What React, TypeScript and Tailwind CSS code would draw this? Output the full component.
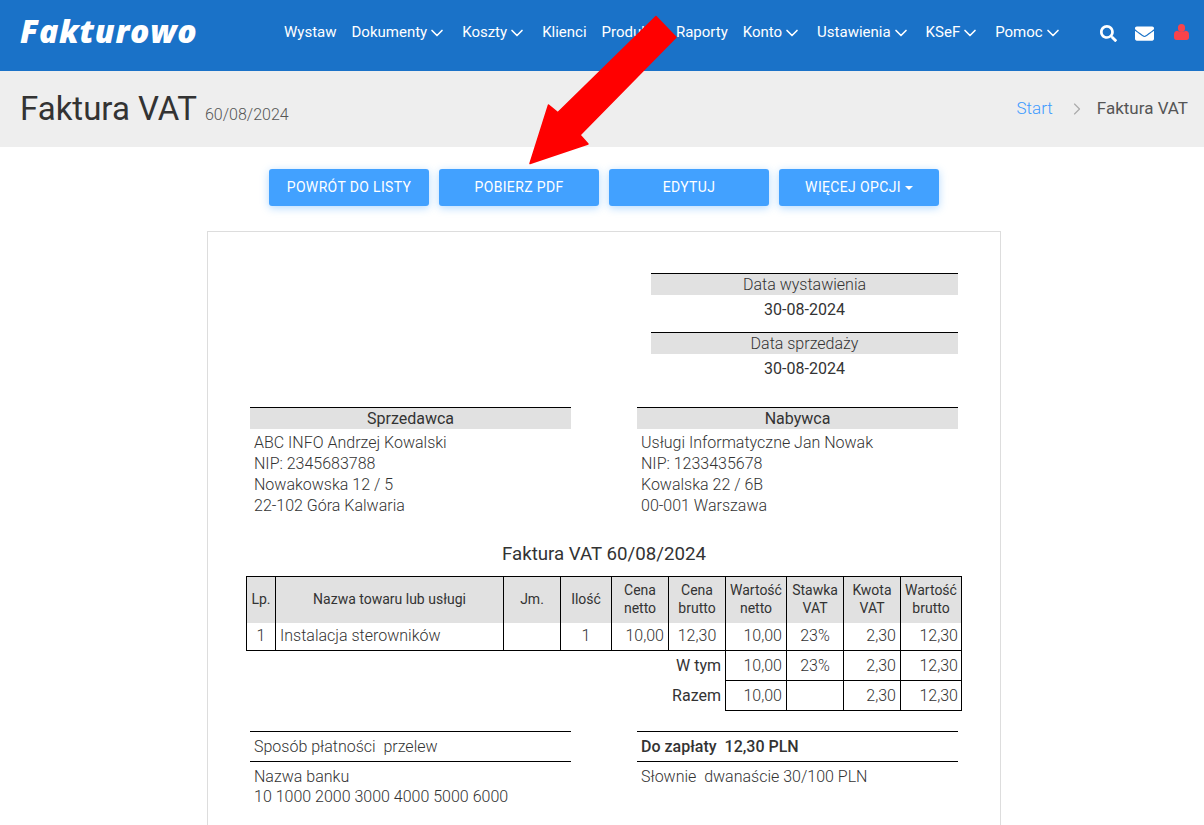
import React from "react";
import { ChevronDown, ChevronRight } from "lucide-react";
import { FaSearch, FaEnvelope } from "react-icons/fa";

const nav: [string, boolean][] = [
  ["Wystaw", false],
  ["Dokumenty", true],
  ["Koszty", true],
  ["Klienci", false],
  ["Produkty", false],
  ["Raporty", false],
  ["Konto", true],
  ["Ustawienia", true],
  ["KSeF", true],
  ["Pomoc", true],
];

const btn =
  "w-[160px] h-[37px] flex items-center justify-center bg-[#42a1ff] text-white text-[14px] rounded-[3px] shadow-[0_2px_8px_rgba(66,161,255,0.4)] tracking-[0.35px]";

function DateBlock({ label, value }: { label: string; value: string }) {
  return (
    <div className="w-[307px] text-center">
      <div className="border-t border-black bg-[#e1e1e1] h-[22px] leading-[21px] font-light text-[16px] text-[#333]">{label}</div>
      <div className="h-[37px] leading-[29px] text-[16px] text-[#333]">{value}</div>
    </div>
  );
}

function Party({ title, lines }: { title: string; lines: string[] }) {
  return (
    <div className="w-[321px]">
      <div className="border-t border-black bg-[#e1e1e1] h-[22px] leading-[21px] text-center text-[16px] text-[#333]">{title}</div>
      <div className="pl-[4px] pt-[3px] font-light text-[16px] leading-[21px] text-[#333]">
        {lines.map((l) => (
          <div key={l}>{l}</div>
        ))}
      </div>
    </div>
  );
}

const th = "border border-b-0 border-black font-normal text-[14px] leading-[18px] text-[#333] text-center align-middle p-0 pb-[2px]";
const td = "border border-black font-light text-[16px] text-[#333] p-0 pr-[4px] text-right";
const tdl = "border border-black font-light text-[16px] text-[#333] p-0 pr-[3px] text-right";
const tdc = "border border-black font-light text-[16px] text-[#333] p-0 text-center";

export default function App() {
  return (
    <div className="relative h-[825px] overflow-hidden bg-white font-['Roboto',sans-serif] text-[#333]">
      <header className="h-[71px] bg-[#1a72c8] flex items-center text-white">
        <div className="w-[284px] pl-[20px] font-['Open_Sans',sans-serif] italic font-extrabold text-[32px] leading-none tracking-[0.7px] -mt-[9px]">
          Fakturowo
        </div>
        <nav className="flex items-center gap-[15px] text-[15px] -mt-[6px]">
          {nav.map(([n, c]) => (
            <span key={n} className="flex items-center whitespace-nowrap">
              {n}
              {c && <ChevronDown size={20} strokeWidth={2} />}
            </span>
          ))}
        </nav>
        <div className="ml-auto flex items-center pr-[15px] -mt-[5px]">
          <FaSearch size={17} className="mt-[1px]" />
          <FaEnvelope size={19} className="ml-[18px]" />
          <svg width="15" height="16" viewBox="0 0 15 16" className="ml-[20px] -mt-[2px]">
            <ellipse cx="7.500" cy="4" rx="3.600" ry="4" fill="#f8434a" />
            <path d="M0 13.500V10.500C0 8 1.500 6.800 3.500 6.800C5 8.300 10 8.300 11.500 6.800C13.500 6.800 15 8 15 10.500V13.500C15 15 14 16 12.500 16H2.500C1 16 0 15 0 13.500Z" fill="#f8434a" />
          </svg>
        </div>
      </header>

      <div className="h-[76px] bg-[#eee] flex items-center justify-between pl-[20px] pr-[16px]">
        <div className="flex items-baseline gap-[8px]">
          <h1 className="text-[33px] font-normal text-[#333] leading-none">Faktura VAT</h1>
          <span className="text-[16px] font-light text-[#555]">60/08/2024</span>
        </div>
        <div className="flex items-center text-[17px]">
          <span className="text-[#3d9bff] font-light">Start</span>
          <ChevronRight size={20} strokeWidth={1.4} className="text-[#aaa] ml-[14px] mr-[10px]" />
          <span className="text-[#555]">Faktura VAT</span>
        </div>
      </div>

      <div className="flex justify-center gap-[10px] mt-[22px] ml-[4px]">
        <div className={btn}>POWRÓT DO LISTY</div>
        <div className={btn}>POBIERZ PDF</div>
        <div className={btn}>EDYTUJ</div>
        <div className={btn}>
          WIĘCEJ OPCJI
          <span className="ml-[4px] border-x-[4px] border-x-transparent border-t-[4px] border-t-white"></span>
        </div>
      </div>

      <main className="w-[794px] ml-[207px] mt-[25px] border border-[#ddd] pt-[41px] h-[700px]">
        <div className="flex flex-col items-end pr-[42px]">
          <DateBlock label="Data wystawienia" value="30-08-2024" />
          <DateBlock label="Data sprzedaży" value="30-08-2024" />
        </div>
        <div className="flex justify-between px-[42px] mt-[16px]">
          <Party title="Sprzedawca" lines={["ABC INFO Andrzej Kowalski", "NIP: 2345683788", "Nowakowska 12 / 5", "22-102 Góra Kalwaria"]} />
          <Party title="Nabywca" lines={["Usługi Informatyczne Jan Nowak", "NIP: 1233435678", "Kowalska 22 / 6B", "00-001 Warszawa"]} />
        </div>
        <h2 className="text-center text-[18.7px] font-normal leading-[24px] mt-[26px] text-[#333]">Faktura VAT 60/08/2024</h2>
        <table className="ml-[38px] mt-[10px] border-collapse table-fixed w-[715px]">
          <colgroup>
            <col className="w-[29px]" />
            <col className="w-[228px]" />
            <col className="w-[57px]" />
            <col className="w-[51px]" />
            <col className="w-[57px]" />
            <col className="w-[57px]" />
            <col className="w-[61px]" />
            <col className="w-[57px]" />
            <col className="w-[57px]" />
            <col className="w-[61px]" />
          </colgroup>
          <thead>
            <tr className="h-[46px] bg-[#e1e1e1]">
              <th className={th}>Lp.</th>
              <th className={th}>Nazwa towaru lub usługi</th>
              <th className={th}>Jm.</th>
              <th className={th}>Ilość</th>
              <th className={th}>Cena<br />netto</th>
              <th className={th}>Cena<br />brutto</th>
              <th className={th}>Wartość<br />netto</th>
              <th className={th}>Stawka<br />VAT</th>
              <th className={th}>Kwota<br />VAT</th>
              <th className={th}>Wartość<br />brutto</th>
            </tr>
          </thead>
          <tbody>
            <tr className="h-[28px] [&>td]:border-t-0">
              <td className={tdc}>1</td>
              <td className={td + " !text-left pl-[4px]"}>Instalacja sterowników</td>
              <td className={tdc}></td>
              <td className={tdc}>1</td>
              <td className={td}>10,00</td>
              <td className={tdc}>12,30</td>
              <td className={td}>10,00</td>
              <td className={tdc}>23%</td>
              <td className={td}>2,30</td>
              <td className={tdl}>12,30</td>
            </tr>
            <tr className="h-[30px]">
              <td colSpan={6} className="text-right pr-[4px] text-[16px] font-normal text-[#333] p-0 border-r border-black">W tym</td>
              <td className={td}>10,00</td>
              <td className={tdc}>23%</td>
              <td className={td}>2,30</td>
              <td className={tdl}>12,30</td>
            </tr>
            <tr className="h-[30px]">
              <td colSpan={6} className="text-right pr-[4px] text-[16px] font-normal text-[#333] p-0 border-r border-black">Razem</td>
              <td className={td}>10,00</td>
              <td className={tdc}></td>
              <td className={td}>2,30</td>
              <td className={tdl}>12,30</td>
            </tr>
          </tbody>
        </table>
        <div className="flex justify-between px-[42px] mt-[20px] text-[16px] leading-[20px] text-[#333]">
          <div className="w-[321px]">
            <div className="border-t border-black h-[30px] pl-[4px] pt-[5px] font-light">Sposób płatności&nbsp; przelew</div>
            <div className="border-t border-black pl-[4px] pt-[5px] font-light">
              <div>Nazwa banku</div>
              <div>10 1000 2000 3000 4000 5000 6000</div>
            </div>
          </div>
          <div className="w-[321px]">
            <div className="border-t border-black h-[30px] pl-[4px] pt-[5px] font-medium">Do zapłaty&nbsp; 12,30 PLN</div>
            <div className="border-t border-black pl-[4px] pt-[5px] font-light">Słownie&nbsp; dwanaście 30/100 PLN</div>
          </div>
        </div>
      </main>

      <svg className="absolute left-[520px] top-[10px] pointer-events-none" width="170" height="160" viewBox="0 0 170 160">
        <path d="M136 6.500 L156 27.300 L60 125 L68 134 L10 153.500 L28.500 95 L37.700 102.700 Z" fill="#ff0000" stroke="#ff0000" strokeWidth="1.500" strokeLinejoin="round" />
      </svg>
    </div>
  );
}
